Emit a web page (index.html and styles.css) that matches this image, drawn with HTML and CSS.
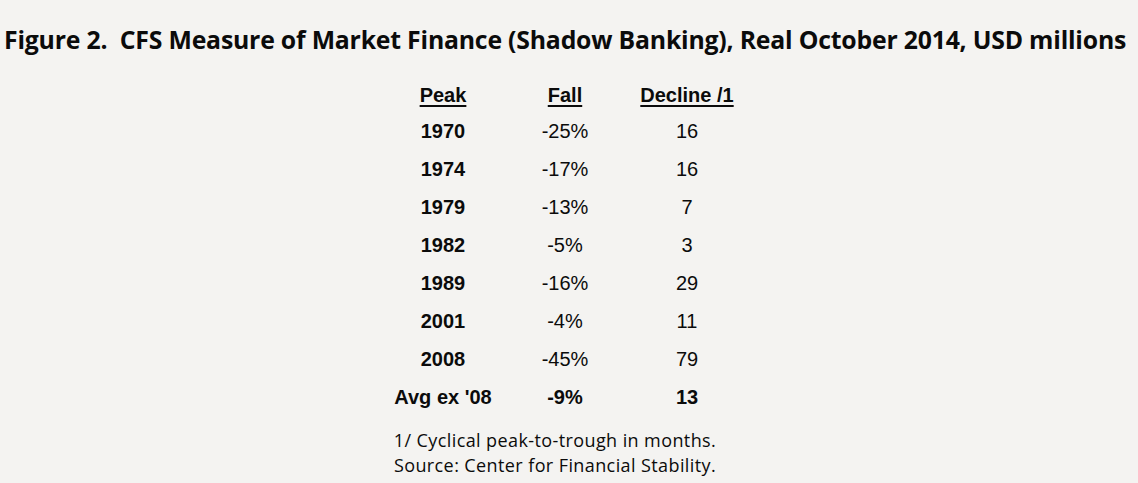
FILE: index.html
```html
<!DOCTYPE html>
<html>
<head>
<meta charset="utf-8">
<link rel="stylesheet" href="styles.css">
</head>
<body>
<div class="page">
  <h1 class="title">Figure 2.&nbsp; CFS Measure of Market Finance (Shadow Banking), Real October 2014, USD millions</h1>
  <div class="table">
    <div class="row head"><span class="c1"><u>Peak</u></span><span class="c2"><u>Fall</u></span><span class="c3"><u>Decline /1</u></span></div>
    <div class="row"><span class="c1 b">1970</span><span class="c2">-25%</span><span class="c3">16</span></div>
    <div class="row"><span class="c1 b">1974</span><span class="c2">-17%</span><span class="c3">16</span></div>
    <div class="row"><span class="c1 b">1979</span><span class="c2">-13%</span><span class="c3">7</span></div>
    <div class="row"><span class="c1 b">1982</span><span class="c2">-5%</span><span class="c3">3</span></div>
    <div class="row"><span class="c1 b">1989</span><span class="c2">-16%</span><span class="c3">29</span></div>
    <div class="row"><span class="c1 b">2001</span><span class="c2">-4%</span><span class="c3">11</span></div>
    <div class="row"><span class="c1 b">2008</span><span class="c2">-45%</span><span class="c3">79</span></div>
    <div class="row avg"><span class="c1">Avg ex '08</span><span class="c2">-9%</span><span class="c3">13</span></div>
  </div>
  <div class="notes">
    <p>1/ Cyclical peak-to-trough in months.</p>
    <p>Source: Center for Financial Stability.</p>
  </div>
</div>
</body>
</html>
```
FILE: styles.css
```css
html, body {
  margin: 0;
  padding: 0;
  background: #f4f3f1;
}
.page {
  width: 1138px;
  height: 483px;
  overflow: hidden;
  color: #0b0b0b;
}
.title {
  margin: 0;
  padding: 24px 0 0 4px;
  font-family: "Open Sans", sans-serif;
  font-weight: 700;
  font-size: 24.8px;
  line-height: 30px;
  white-space: nowrap;
  letter-spacing: -0.2px;
}
.table {
  margin: 30px 0 0 382px;
  font-family: "Liberation Sans", Arial, sans-serif;
  font-size: 20px;
}
.row {
  display: grid;
  grid-template-columns: 122px 122px 122px;
  height: 38px;
  line-height: 22px;
}
.row.head {
  height: 36px;
}
.row span {
  text-align: center;
}
.head span, .b, .avg span {
  font-weight: 700;
}
.head u {
  text-decoration-thickness: 2px;
  text-underline-offset: 3px;
}
.notes {
  margin: 4px 0 0 0;
  text-align: center;
  width: 1110px;
  font-family: "Open Sans", sans-serif;
  font-size: 18px;
  line-height: 25px;
  letter-spacing: 0.4px;
}
.notes p {
  margin: 0;
}
```
